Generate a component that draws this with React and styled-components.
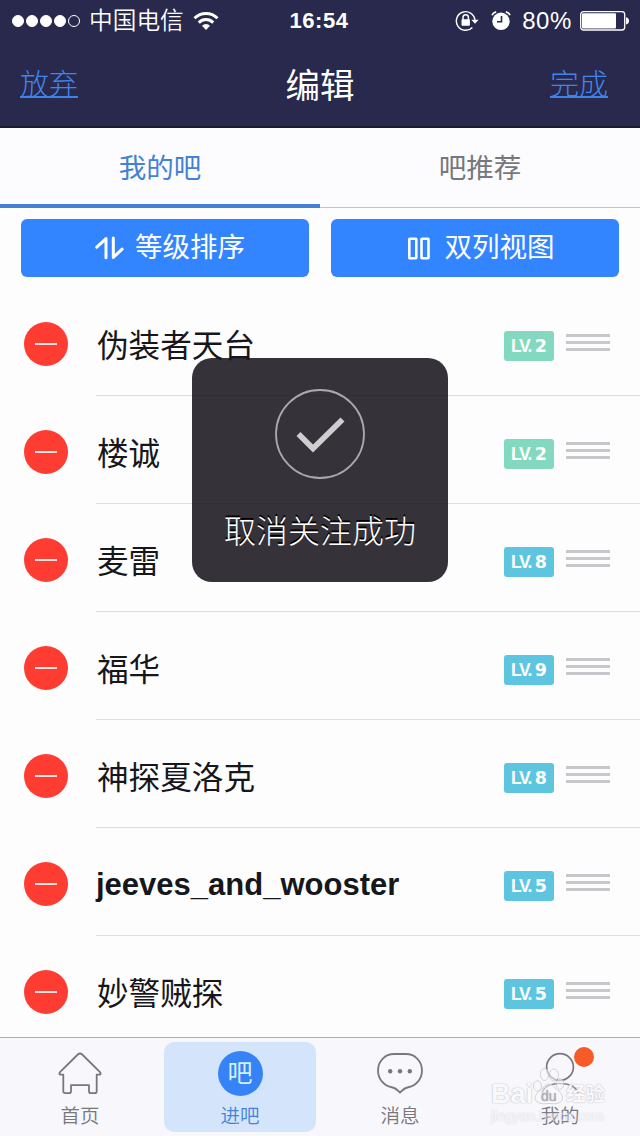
import React from 'react'
import styled, { createGlobalStyle } from 'styled-components'

const GlobalStyle = createGlobalStyle`
    * {
        box-sizing: border-box;
    }
    body {
        margin: 0;
        background-color: #fdfdfe;
        font-family: "Liberation Sans", "Noto Sans CJK SC", sans-serif;
        overflow: hidden;
    }
`
const Container = styled.div`
    position: relative;
    width: 640px;
    height: 1136px;
    display: flex;
    flex-direction: column;
    overflow: hidden;
    background-color: #fdfdfe;
`
const Header = styled.header`
    height: 128px;
    flex-shrink: 0;
    background-color: #28294d;
    border-bottom: 2px solid #1a1a30;
    color: white;
`
const StatusBar = styled.div`
    height: 40px;
    display: grid;
    grid-template-columns: 1fr auto 1fr;
    align-items: center;
    padding: 0 11px 0 12px;
`
const StatusLeft = styled.div`
    display: flex;
    align-items: center;
`
const Signal = styled.div`
    display: flex;
    gap: 2px;
    margin-right: 9px;
`
const Dot = styled.span`
    width: 12px;
    height: 12px;
    border-radius: 50%;
    border: 1px solid white;
    background-color: ${props => props.$on ? 'white' : 'transparent'};
`
const Carrier = styled.span`
    font-size: 23.7px;
    line-height: 40px;
    font-weight: 350;
    margin-right: 9px;
`
const Clock = styled.span`
    font-size: 22px;
    font-weight: bold;
    letter-spacing: 0.5px;
    line-height: 42px;
    margin-right: 3px;
`
const StatusRight = styled.div`
    display: flex;
    align-items: center;
    justify-content: flex-end;
`
const StatusIcons = styled.div`
    display: flex;
    align-items: center;
    gap: 12px;
`
const Percent = styled.span`
    font-size: 24px;
    line-height: 42px;
    letter-spacing: 0.6px;
    margin: 0 8px 0 11px;
`
const NavBar = styled.div`
    height: 88px;
    display: flex;
    justify-content: space-between;
    align-items: center;
    padding: 0 32px 0 20px;
`
const NavLink = styled.a`
    width: 58px;
    height: 29px;
    color: #4384ec;
    font-size: 29px;
    line-height: 33px;
    font-weight: 300;
    white-space: nowrap;
    border-bottom: 2px solid #3f80ea;
    margin-top: -1px;
`
const PageTitle = styled.h1`
    margin: 3px 0 0 12px;
    font-size: 34.5px;
    font-weight: 400;
    line-height: 50px;
`
const Tabs = styled.div`
    height: 80px;
    flex-shrink: 0;
    display: flex;
    background-color: #fcfcfe;
`
const Tab = styled.div`
    flex: 1;
    display: flex;
    justify-content: center;
    line-height: 81px;
    font-size: 27.5px;
    color: ${props => props.$active ? '#4381d6' : '#77777c'};
    border-bottom: ${props => props.$active ? '4px solid #4680d2' : '1px solid #c2c2c8'};
    height: 80px;
`
const Toolbar = styled.div`
    display: grid;
    grid-template-columns: 288px 288px;
    gap: 22px;
    padding: 11px 21px;
    height: 80px;
    flex-shrink: 0;
`
const ToolButton = styled.button`
    height: 58px;
    border: none;
    border-radius: 6px;
    background-color: #3385ff;
    color: white;
    font-family: inherit;
    font-size: 27.5px;
    line-height: 62px;
    display: flex;
    align-items: center;
    justify-content: center;
    gap: ${props => props.$gap}px;
    padding: ${props => props.$padding};
    white-space: nowrap;
`
const List = styled.div`
    flex: 1;
    min-height: 0;
    overflow: hidden;
`
const Row = styled.div`
    height: 108px;
    display: flex;
    padding-left: 24px;
`
const RemoveButton = styled.button`
    width: 44px;
    height: 44px;
    margin: 34px 28px 0 0;
    padding: 0;
    border: none;
    border-radius: 50%;
    background-color: #ff3c32;
    display: flex;
    align-items: center;
    justify-content: center;
`
const Minus = styled.span`
    width: 22px;
    height: 2px;
    background-color: #ffe4e2;
`
const RowBody = styled.div`
    flex: 1;
    display: flex;
    border-bottom: 1px solid #dedee1;
    padding-right: 30px;
`
const BarName = styled.span`
    flex: 1;
    font-size: ${props => props.$latin ? '31px' : '31.6px'};
    font-weight: ${props => props.$latin ? 'bold' : '400'};
    line-height: ${props => props.$latin ? '114px' : '116px'};
    padding-left: ${props => props.$latin ? '0' : '1px'};
    color: #17171b;
    white-space: nowrap;
`
const Level = styled.span`
    width: 50px;
    height: 30px;
    margin: 43px 12px 0 0;
    border-radius: 3px;
    background-color: ${props => props.$level > 3 ? '#5ec5e0' : '#82d9bf'};
    color: white;
    font-weight: bold;
    line-height: 32px;
    display: flex;
    align-items: center;
    justify-content: center;
`
const LevelLabel = styled.span`
    font-size: 17.5px;
    letter-spacing: -1.5px;
    margin-right: 4px;
`
const LevelNumber = styled.span`
    font-family: "DejaVu Sans", sans-serif;
    font-size: 17.5px;
`
const Handle = styled.div`
    width: 44px;
    margin-top: 46px;
    display: flex;
    flex-direction: column;
    gap: 4px;
`
const HandleLine = styled.span`
    height: 3px;
    background-color: #c7c7cc;
`
const Toast = styled.div`
    position: absolute;
    top: 358px;
    left: 192px;
    width: 256px;
    height: 224px;
    border-radius: 20px;
    background-color: rgba(23, 21, 27, 0.87);
    color: white;
    display: flex;
    flex-direction: column;
    align-items: center;
    padding-top: 30px;
`
const ToastText = styled.span`
    margin-top: 28px;
    font-size: 32px;
    font-weight: 300;
    line-height: 48px;
    text-shadow: 0 -2px 0 black;
`
const BottomNav = styled.nav`
    height: 99px;
    flex-shrink: 0;
    display: flex;
    border-top: 1px solid #adadb3;
    background-color: #f7f7fc;
    padding-top: 4px;
`
const NavItem = styled.div`
    position: relative;
    width: 152px;
    height: 90px;
    margin: 0 4px;
    border-radius: 10px;
    background-color: ${props => props.$active ? '#d4e5fb' : 'transparent'};
    color: ${props => props.$active ? '#4384d9' : '#77777c'};
    display: flex;
    flex-direction: column;
    align-items: center;
    padding-top: 8px;
`
const NavIcon = styled.div`
    height: 46px;
    display: flex;
    align-items: center;
`
const BarIcon = styled.span`
    width: 45px;
    height: 45px;
    border-radius: 50%;
    background-color: #3583f7;
    color: #d6f1ff;
    font-size: 25px;
    line-height: 44px;
    text-align: center;
`
const NavLabel = styled.span`
    font-size: 19.5px;
    font-weight: 350;
    line-height: 28px;
    margin-top: 6px;
`
const Badge = styled.span`
    position: absolute;
    top: 5px;
    right: 42px;
    width: 20px;
    height: 20px;
    border-radius: 50%;
    background-color: #f65a26;
`
const Watermark = styled.div`
    position: absolute;
    left: 491px;
    top: 1065px;
    width: 116px;
    color: #fafafd;
    font-weight: bold;
    text-shadow: 0 0 1px #b4b4bc, 0 0 2px #d0d0d8;
`
const WatermarkLogo = styled.div`
    display: flex;
    height: 42px;
    line-height: 58px;
    font-size: 27px;
    opacity: 0.9;
`
const WatermarkName = styled.span`
    font-size: 19.5px;
    line-height: 59px;
    margin-left: 1px;
`
const WatermarkUrl = styled.div`
    font-size: 14px;
    font-weight: normal;
    line-height: 18px;
    opacity: 0.5;
`
const Paw = styled.svg`
    flex-shrink: 0;
    margin-left: -1px;
`

const WifiIcon = () => (
    <svg width="26" height="20" viewBox="0 0 26 20">
        <g fill="none" stroke="white" strokeWidth="3">
            <path d="M1.5 7.2a16.3 16.3 0 0 1 23 0" />
            <path d="M5.8 11.6a10.2 10.2 0 0 1 14.4 0" />
        </g>
        <path d="M9 14.7a5.7 5.7 0 0 1 8 0l-4 4.3z" fill="white" />
    </svg>
)

const LockIcon = () => (
    <svg width="24" height="22" viewBox="0 0 24 22">
        <path d="M17.4 17.4A9.3 9.3 0 1 1 19.9 10" fill="none" stroke="white" strokeWidth="1.4" />
        <path d="M16.4 9.8h7.2L20 13.8z" fill="white" />
        <path d="M8 10V7.5a2.7 2.7 0 0 1 5.4 0V10" fill="none" stroke="white" strokeWidth="1.5" />
        <rect x="6.5" y="9.3" width="8.4" height="6.4" rx="0.8" fill="white" />
    </svg>
)

const AlarmIcon = () => (
    <svg width="20" height="20" viewBox="0 0 20 20">
        <circle cx="10" cy="10.3" r="8.7" fill="white" />
        <path d="M1 4.3Q2 1.5 5.2.8M19 4.3Q18 1.5 14.8.8" fill="none" stroke="white" strokeWidth="1.7" />
        <path d="M10.5 5v5.8H6" fill="none" stroke="#28294d" strokeWidth="1.6" />
    </svg>
)

const BatteryIcon = () => (
    <svg width="49" height="20" viewBox="0 0 49 20">
        <rect x=".7" y=".7" width="44" height="18.3" rx="2.8" fill="none" stroke="white" strokeWidth="1.3" />
        <rect x="2" y="2.2" width="34" height="15.3" rx="1" fill="white" />
        <path d="M46 6.3q3 .8 3 3.6t-3 3.6z" fill="white" />
    </svg>
)

const SortIcon = () => (
    <svg width="29" height="24" viewBox="0 0 29 24" fill="none" stroke="white" strokeWidth="3" strokeLinejoin="round" strokeLinecap="round">
        <path d="M1.8 11.2L11 2.6V21.8" />
        <path d="M18.3 2v19.4l8.8-8.2" />
    </svg>
)

const ColumnsIcon = () => (
    <svg width="23" height="23" viewBox="0 0 23 23" fill="none" stroke="white" strokeWidth="2.6">
        <rect x="1.3" y="1.8" width="7" height="19.4" rx="0.5" />
        <rect x="13.5" y="1.8" width="7" height="19.4" rx="0.5" />
    </svg>
)

const CheckIcon = () => (
    <svg width="92" height="92" viewBox="0 0 92 92" fill="none">
        <circle cx="46" cy="46" r="44" stroke="#aaa9ad" strokeWidth="1.8" />
        <path d="M24.5 46L39 60.5L68.5 31.5" stroke="#ceced1" strokeWidth="5.6" />
    </svg>
)

const HomeIcon = () => (
    <svg width="44" height="44" viewBox="0 0 44 44" fill="none" stroke="#77777c" strokeWidth="1.8" strokeLinejoin="round">
        <path d="M19.8 3.5Q22 1.5 24.2 3.5L42 21.2Q43.5 23.5 41.5 23.7H38.7V40.2Q38.7 42.2 36.7 42.2H33Q31 42.2 31 40.2V34.2H13V40.2Q13 42.2 11 42.2H7.3Q5.3 42.2 5.3 40.2V23.7H2.5Q.5 23.5 2 21.2Z" />
    </svg>
)

const MessageIcon = () => (
    <svg width="48" height="44" viewBox="0 0 48 44">
        <path d="M18 3H30C39 3 46 10.2 46 19.5C46 28 40 35 31.5 36.5Q28.5 37 24 41.5Q19.5 37 16.5 36.5C8 35 2 28 2 19.5C2 10.2 9 3 18 3Z" fill="none" stroke="#77777c" strokeWidth="1.8" />
        <circle cx="14.2" cy="20.2" r="2.2" fill="#77777c" />
        <circle cx="24" cy="20.2" r="2.2" fill="#77777c" />
        <circle cx="33.8" cy="20.2" r="2.2" fill="#77777c" />
    </svg>
)

const UserIcon = () => (
    <svg width="44" height="44" viewBox="0 0 44 44" fill="none" stroke="#77777c" strokeWidth="1.7">
        <circle cx="22" cy="16" r="13.4" />
        <path d="M4 42Q7 32.5 22 32.5T40 42" />
    </svg>
)

const PawIcon = () => (
    <Paw width="33" height="40" viewBox="0 0 33 40">
        <g fill="#fafafd" fillOpacity="0.65" stroke="#c9c9d1" strokeWidth="0.9">
            <ellipse cx="5.5" cy="21" rx="4" ry="5.2" />
            <ellipse cx="12.5" cy="9.5" rx="4.2" ry="6" />
            <ellipse cx="22" cy="10" rx="4.5" ry="6" />
            <ellipse cx="28" cy="19" rx="3.8" ry="5.2" />
            <path d="M17 19Q21 19 24 24Q31 28 30.5 34Q29 40 17 38.5Q5 40 3 34Q2.5 29 10 24Q13 19 17 19Z" />
        </g>
        <text x="9" y="35.5" fontSize="14" fontWeight="normal" fill="#a4a4ac">du</text>
    </Paw>
)

const bars = [
    { id: 1, name: '伪装者天台', level: 2 },
    { id: 2, name: '楼诚', level: 2 },
    { id: 3, name: '麦雷', level: 8 },
    { id: 4, name: '福华', level: 9 },
    { id: 5, name: '神探夏洛克', level: 8 },
    { id: 6, name: 'jeeves_and_wooster', level: 5, latin: true },
    { id: 7, name: '妙警贼探', level: 5 },
]

const App = () => {
  return (
    <Container>
        <GlobalStyle />
        <Header>
            <StatusBar>
                <StatusLeft>
                    <Signal>
                        {[1, 2, 3, 4, 5].map(n => <Dot key={n} $on={n < 5} />)}
                    </Signal>
                    <Carrier>中国电信</Carrier>
                    <WifiIcon />
                </StatusLeft>
                <Clock>16:54</Clock>
                <StatusRight>
                    <StatusIcons>
                        <LockIcon />
                        <AlarmIcon />
                    </StatusIcons>
                    <Percent>80%</Percent>
                    <BatteryIcon />
                </StatusRight>
            </StatusBar>
            <NavBar>
                <NavLink>放弃</NavLink>
                <PageTitle>编辑</PageTitle>
                <NavLink>完成</NavLink>
            </NavBar>
        </Header>
        <Tabs>
            <Tab $active>我的吧</Tab>
            <Tab>吧推荐</Tab>
        </Tabs>
        <Toolbar>
            <ToolButton $gap={11} $padding="0 0 0 10px">
                <SortIcon />
                <span>等级排序</span>
            </ToolButton>
            <ToolButton $gap={14} $padding="0 0 0 12px">
                <ColumnsIcon />
                <span>双列视图</span>
            </ToolButton>
        </Toolbar>
        <List>
            {bars.map(bar => (
                <Row key={bar.id}>
                    <RemoveButton><Minus /></RemoveButton>
                    <RowBody>
                        <BarName $latin={bar.latin}>{bar.name}</BarName>
                        <Level $level={bar.level}>
                            <LevelLabel>LV.</LevelLabel>
                            <LevelNumber>{bar.level}</LevelNumber>
                        </Level>
                        <Handle>
                            <HandleLine />
                            <HandleLine />
                            <HandleLine />
                        </Handle>
                    </RowBody>
                </Row>
            ))}
        </List>
        <BottomNav>
            <NavItem>
                <NavIcon><HomeIcon /></NavIcon>
                <NavLabel>首页</NavLabel>
            </NavItem>
            <NavItem $active>
                <NavIcon><BarIcon>吧</BarIcon></NavIcon>
                <NavLabel>进吧</NavLabel>
            </NavItem>
            <NavItem>
                <NavIcon><MessageIcon /></NavIcon>
                <NavLabel>消息</NavLabel>
            </NavItem>
            <NavItem>
                <NavIcon><UserIcon /></NavIcon>
                <NavLabel>我的</NavLabel>
                <Badge />
            </NavItem>
        </BottomNav>
        <Toast>
            <CheckIcon />
            <ToastText>取消关注成功</ToastText>
        </Toast>
        <Watermark>
            <WatermarkLogo>
                <span>Bai</span>
                <PawIcon />
                <WatermarkName>经验</WatermarkName>
            </WatermarkLogo>
            <WatermarkUrl>jingyan.baidu.com</WatermarkUrl>
        </Watermark>
    </Container>
)}

export default App
